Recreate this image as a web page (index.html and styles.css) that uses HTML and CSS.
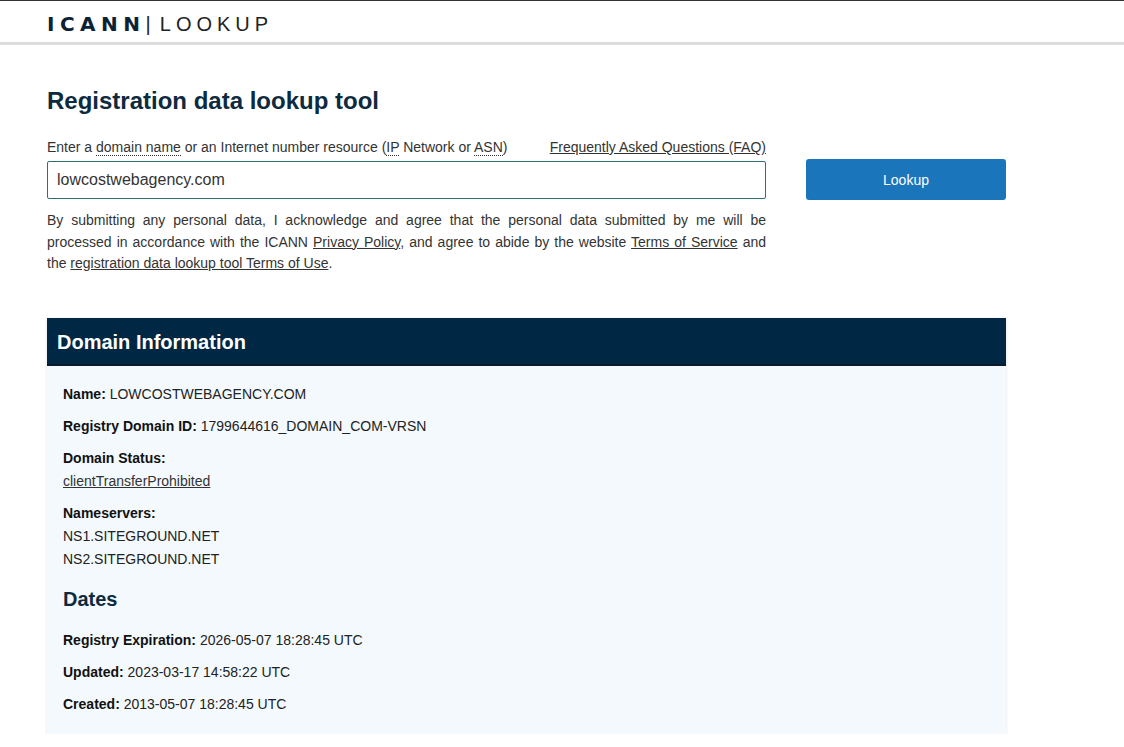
FILE: index.html
```html
<!DOCTYPE html>
<html lang="en">
<head>
<meta charset="utf-8">
<title>ICANN Lookup</title>
<link rel="stylesheet" href="styles.css">
</head>
<body>
<header class="site-header">
  <div class="logo"><span class="logo-icann">ICANN</span><span class="logo-bar">|</span><span class="logo-lookup">LOOKUP</span></div>
</header>
<main class="main">
  <h1 class="title">Registration data lookup tool</h1>
  <div class="lookup-row">
    <div class="form-col">
      <div class="label-row">
        <span class="label">Enter a <abbr class="dotted">domain name</abbr> or an Internet number resource (<abbr class="dotted">IP</abbr> Network or <abbr class="dotted">ASN</abbr>)</span>
        <a class="link" href="#">Frequently Asked Questions (FAQ)</a>
      </div>
      <div class="input">lowcostwebagency.com</div>
      <p class="disclaimer">By submitting any personal data, I acknowledge and agree that the personal data submitted by me will be processed in accordance with the ICANN <a class="link" href="#">Privacy Policy</a>, and agree to abide by the website <a class="link" href="#">Terms of Service</a> and the <a class="link" href="#">registration data lookup tool Terms of Use</a>.</p>
    </div>
    <div class="button-col">
      <button class="lookup-btn">Lookup</button>
    </div>
  </div>

  <section class="card">
    <h2 class="card-head">Domain Information</h2>
    <div class="card-body">
      <div class="row"><b>Name:</b> LOWCOSTWEBAGENCY.COM</div>
      <div class="row"><b>Registry Domain ID:</b> 1799644616_DOMAIN_COM-VRSN</div>
      <div class="row"><b>Domain Status:</b><div class="sub"><a class="link" href="#">clientTransferProhibited</a></div></div>
      <div class="row"><b>Nameservers:</b><div class="sub">NS1.SITEGROUND.NET</div><div class="sub">NS2.SITEGROUND.NET</div></div>
      <h3 class="section-title">Dates</h3>
      <div class="row"><b>Registry Expiration:</b> 2026-05-07 18:28:45 UTC</div>
      <div class="row"><b>Updated:</b> 2023-03-17 14:58:22 UTC</div>
      <div class="row last"><b>Created:</b> 2013-05-07 18:28:45 UTC</div>
    </div>
  </section>
</main>
</body>
</html>
```

FILE: styles.css
```css
* { box-sizing: border-box; }
html, body { margin: 0; padding: 0; }
body {
  font-family: "Liberation Sans", Arial, sans-serif;
  font-size: 14px;
  color: #333;
  background: #fff;
  border-top: 1px solid #333;
}
.site-header {
  height: 44px;
  border-bottom: 3px solid #dcdcdc;
  display: flex;
  align-items: center;
  padding-left: 47px;
  padding-top: 4px;
}
.logo {
  line-height: 1;
  display: flex;
  align-items: center;
  color: #0b2236;
}
.logo-icann {
  font-family: "DejaVu Sans", sans-serif;
  font-weight: bold;
  letter-spacing: 5.5px;
  font-size: 20px;
}
.logo-bar {
  margin: 0 9px 0 0;
  font-size: 20px;
  color: #222;
}
.logo-lookup {
  letter-spacing: 5px;
  color: #222;
  font-size: 20px;
}
.main {
  width: 959px;
  margin-left: 47px;
  padding-top: 41px;
}
.title {
  margin: 0 0 22px;
  font-size: 24px;
  line-height: 30px;
  font-weight: bold;
  color: #0e2a3f;
}
.lookup-row {
  display: flex;
  gap: 40px;
}
.form-col { width: 719px; }
.label-row {
  display: flex;
  justify-content: space-between;
  line-height: 18px;
  margin-bottom: 5px;
}
.label { color: #333; }
.dotted {
  text-decoration: none;
  border-bottom: 1px dotted #333;
}
.link { color: #333; text-decoration: underline; }
.input {
  height: 38px;
  border: 1px solid #2f6f78;
  border-radius: 2px;
  padding: 0 9px;
  font-size: 16px;
  line-height: 36px;
  color: #333;
}
.disclaimer {
  margin: 11px 0 0;
  text-align: justify;
  line-height: 21.5px;
}
.button-col { width: 200px; padding-top: 21px; }
.lookup-btn {
  width: 200px;
  height: 41px;
  background: #1a75bb;
  color: #fff;
  border: none;
  border-radius: 3px;
  font-family: "Liberation Sans", Arial, sans-serif;
  font-size: 14px;
}
.card {
  margin-top: 43px;
  box-shadow: 0 1px 3px rgba(0,0,0,0.12);
  background: #f3f9fd;
}
.card-head {
  margin: 0;
  height: 48px;
  background: #002743;
  color: #fff;
  font-size: 20px;
  line-height: 48px;
  padding-left: 10px;
  border-bottom: 2px solid #0b1d2c;
}
.card-body {
  padding: 19px 16px 21px;
}
.row {
  line-height: 18px;
  margin-bottom: 14px;
  color: #222;
}
.row.last { margin-bottom: 0; }
.row b { color: #111; }
.sub { margin-top: 5px; }
.section-title {
  margin: 19px 0 20px;
  font-size: 20px;
  line-height: 24px;
  color: #0e2a3f;
}
```
